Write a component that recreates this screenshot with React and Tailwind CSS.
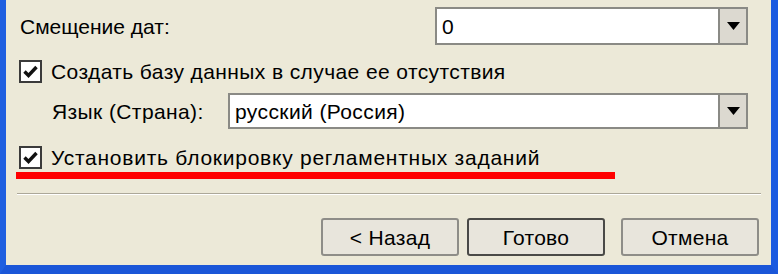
import React from 'react';

// Окно мастера 1С в стиле Windows XP — нижняя часть с флажками и кнопками.

const FONT = { fontFamily: '"Liberation Sans", "DejaVu Sans", Arial, sans-serif' };

function Check() {
  return (
    <span className="w-[23px] h-[23px] shrink-0 bg-white border-2 border-[#3b3b3b] flex items-center justify-center">
      <svg width="15" height="13" viewBox="0 0 15 13" aria-hidden>
        <path d="M1.5 6.5 L5.5 10.5 L13.5 2" fill="none" stroke="#111" strokeWidth="3.4" />
      </svg>
    </span>
  );
}

function Combo({ value, className = '' }) {
  return (
    <div className={`h-full flex bg-white border-2 border-[#8a8a85] ${className}`}>
      <div className="flex-1 flex items-center pl-[5px] text-[21px] tracking-[0.4px] text-black leading-none">{value}</div>
      <div className="w-[28px] shrink-0 bg-[#dcd9d0] border-l-2 border-[#8a8a85] flex items-center justify-center">
        <svg width="13" height="8" viewBox="0 0 13 8" aria-hidden>
          <path d="M0 0 H13 L6.5 8 Z" fill="#000" />
        </svg>
      </div>
    </div>
  );
}

function Btn({ children, def = false }) {
  return (
    <button type="button"
            className={`w-[138px] h-full rounded-[3px] bg-[#e8e5dc] text-[21px] tracking-[0.3px] text-black leading-none
                        ${def ? 'border-2 border-[#4a4a47]' : 'border-2 border-[#8e8d88]'}`}>
      {children}
    </button>
  );
}

export default function App() {
  return (
    <div style={FONT}
         className="w-[778px] h-[274px] overflow-hidden bg-[#ece9d8] border-l-[6px] border-r-[7px] border-b-[9px] border-l-[#1f5fe0] border-r-[#1a5ae0] border-b-[#1a56d8] flex flex-col text-black">
      {/* Смещение дат */}
      <div className="mt-[7px] h-[38px] flex items-center justify-between pl-[14px] pr-[23px]">
        <span className="text-[21px] leading-none">Смещение дат:</span>
        <Combo value="0" className="w-[313px]" />
      </div>

      <div className="mt-[15px] h-[23px] flex items-center gap-[9px] pl-[13px]">
        <Check />
        <span className="text-[21px] tracking-[0.4px] leading-none">Создать базу данных в случае ее отсутствия</span>
      </div>

      <div className="mt-[10px] h-[36px] flex items-center pl-[46px] pr-[23px]">
        <span className="w-[176px] shrink-0 text-[21px] tracking-[0.4px] leading-none">Язык (Страна):</span>
        <Combo value="русский (Россия)" className="flex-1" />
      </div>

      <div className="mt-[17px] h-[23px] flex items-center gap-[9px] pl-[13px]">
        <Check />
        <span className="text-[21px] tracking-[0.75px] leading-none">Установить блокировку регламентных заданий</span>
      </div>

      {/* красное подчёркивание */}
      <div className="mt-[3px] ml-[10px] w-[599px] h-[7px] bg-[#ff0000]" />

      {/* разделитель */}
      <div className="mt-[14px] ml-[11px] mr-[10px] h-[2px] border-t border-[#aca899] border-b border-b-white" />

      <div className="mt-[23px] h-[38px] flex justify-end gap-[8px] pr-[12px]">
        <Btn>&lt; Назад</Btn>
        <Btn def>Готово</Btn>
        <div className="ml-[8px] h-full"><Btn>Отмена</Btn></div>
      </div>
    </div>
  );
}
